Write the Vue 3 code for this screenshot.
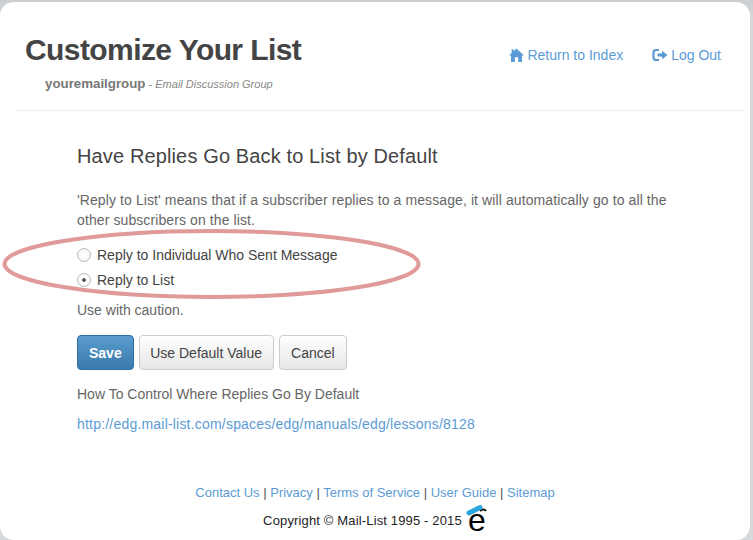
<template>
  <div class="window">
    <header class="page-header">
      <div class="titles">
        <h1>Customize Your List</h1>
        <p class="group"><strong>youremailgroup</strong> - <em>Email Discussion Group</em></p>
      </div>
      <nav class="top-links">
        <a href="#">
          <svg width="15" height="14" viewBox="0 0 15 14"><path d="M7.5 0.5 L15 7.4 H13 V14 H9.2 V9.2 H5.8 V14 H2 V7.4 H0 L2.6 5 V1.2 H4.6 V3.2 Z" fill="#5b9bd5" /></svg>
          Return to Index
        </a>
        <a href="#">
          <svg width="16" height="14" viewBox="0 0 16 14"><path d="M7 2 H4 A2.4 2.4 0 0 0 1.5 4.4 V9.6 A2.4 2.4 0 0 0 4 12 H7" fill="none" stroke="#5b9bd5" stroke-width="2.2" /><path d="M5.5 5.4 H10 V2.8 L15.5 7 L10 11.2 V8.6 H5.5 Z" fill="#5b9bd5" /></svg>
          Log Out
        </a>
      </nav>
    </header>

    <main class="content">
      <h2>Have Replies Go Back to List by Default</h2>
      <p class="intro">'Reply to List' means that if a subscriber replies to a message, it will automatically go to all the other subscribers on the list.</p>

      <div class="options">
        <label v-for="opt in options" :key="opt.value" class="option">
          <input type="radio" name="reply" :value="opt.value" v-model="choice" />
          <span class="dot"></span>
          {{ opt.label }}
        </label>
      </div>

      <p class="caution">Use with caution.</p>

      <div class="buttons">
        <button class="btn primary">Save</button>
        <button class="btn">Use Default Value</button>
        <button class="btn">Cancel</button>
      </div>

      <p class="howto">How To Control Where Replies Go By Default</p>
      <a class="lesson" href="#">http://edg.mail-list.com/spaces/edg/manuals/edg/lessons/8128</a>
    </main>

    <footer class="page-footer">
      <div class="links">
        <template v-for="(link, i) in footerLinks" :key="link">
          <span v-if="i > 0" class="sep"> | </span><a href="#">{{ link }}</a>
        </template>
      </div>
      <div class="copyright">
        Copyright © Mail-List 1995 - 2015
        <span class="logo">
          <span class="logo-e">e</span>
          <svg class="logo-cap" width="24" height="14" viewBox="0 0 24 14"><path d="M16 8 Q20 5 22 8" fill="none" stroke="#111" stroke-width="2" /><path d="M5 10 L16 4.5" stroke="#2ba6de" stroke-width="5" stroke-linecap="round" /></svg>
        </span>
      </div>
    </footer>

    <!-- hand-drawn highlight over the radio buttons -->
    <svg class="oval" width="430" height="80" viewBox="0 0 430 80">
      <ellipse cx="211.5" cy="39" rx="207" ry="33" fill="none" stroke="#e09a9a" stroke-width="4" />
    </svg>
  </div>
</template>

<script setup>
import { ref } from 'vue'

const choice = ref('list')

const options = [
  { value: 'individual', label: 'Reply to Individual Who Sent Message' },
  { value: 'list', label: 'Reply to List' },
]

const footerLinks = ['Contact Us', 'Privacy', 'Terms of Service', 'User Guide', 'Sitemap']
</script>

<style>
html,
body {
  margin: 0;
  height: 540px;
  overflow: hidden;
  background: linear-gradient(#c9ced2, #d5d9dc 20px);
}
</style>

<style scoped>
.window {
  position: relative;
  box-sizing: border-box;
  width: 750px;
  height: 538px;
  margin-top: 2px;
  padding: 0 10px;
  background: #fff;
  border-radius: 14px;
  font-family: "Liberation Sans", Arial, sans-serif;
  font-size: 14px;
  line-height: 20px;
  color: #666;
}

a {
  color: #5b9bd5;
  text-decoration: none;
}

.page-header {
  display: flex;
  justify-content: space-between;
  box-sizing: border-box;
  height: 109px;
  margin: 0 -5px 0 5px;
  padding: 0 5px 0 10px;
  border-bottom: 1px solid #eee;
}

h1 {
  margin: 30px 0 0;
  font-size: 30px;
  line-height: 36px;
  font-weight: bold;
  letter-spacing: -0.58px;
  color: #444;
}

.group {
  margin: 6px 0 0 20px;
  font-size: 11px;
  line-height: 20px;
  color: #888;
}

.group strong {
  font-size: 13.3px;
  color: #777;
}

.top-links {
  display: flex;
  gap: 29px;
  height: 20px;
  padding: 43px 19px 0 0;
}

.top-links a {
  display: flex;
  align-items: center;
  gap: 3px;
}

.content {
  padding: 0 67px;
}

h2 {
  margin: 33px 0 0;
  font-size: 20px;
  line-height: 24px;
  font-weight: normal;
  letter-spacing: 0.13px;
  color: #444;
}

.intro {
  margin: 22px 0 0;
  letter-spacing: 0.1px;
}

.options {
  margin-top: 12px;
}

.option {
  position: relative;
  display: flex;
  align-items: center;
  height: 25px;
  color: #444;
}

.option input {
  position: absolute;
  margin: 0;
  opacity: 0;
}

.dot {
  box-sizing: border-box;
  width: 14px;
  height: 14px;
  margin-right: 6px;
  border: 1px solid #bbb;
  border-radius: 50%;
  background: radial-gradient(#fff, #f4f4f4);
}

.option input:checked + .dot {
  background: radial-gradient(circle, #555 0 1.5px, #fff 2.2px, #f4f4f4);
}

.caution {
  margin: 8px 0 0;
}

.buttons {
  display: flex;
  gap: 5px;
  margin-top: 15px;
}

.btn {
  height: 35px;
  padding: 0 10.5px;
  border: 1px solid #ccc;
  border-radius: 4px;
  background: linear-gradient(#fff, #e6e6e6);
  font-family: inherit;
  font-size: 14px;
  color: #444;
}

.btn:last-child {
  padding: 0 11.5px;
}

.btn.primary {
  padding: 0 11px;
  font-weight: bold;
  color: #fff;
  border-color: #2e6da4;
  background: linear-gradient(#5a9ccf, #3a7aac);
}

.howto {
  margin: 14px 0 0;
}

.lesson {
  display: block;
  margin-top: 10px;
  letter-spacing: 0.2px;
}

.page-footer {
  margin-top: 49px;
  text-align: center;
}

.links {
  font-size: 13px;
  color: #5b9bd5;
}

.sep {
  color: #555;
}

.copyright {
  display: flex;
  justify-content: center;
  gap: 5px;
  margin-top: 8px;
  font-size: 13px;
  letter-spacing: 0.15px;
  color: #222;
}

.logo {
  position: relative;
  display: inline-block;
  width: 20px;
}

.logo-e {
  position: absolute;
  left: 1px;
  top: -7px;
  font-size: 32px;
  line-height: 32px;
  color: #000;
}

.logo-cap {
  position: absolute;
  left: -3px;
  top: -8px;
}

.oval {
  position: absolute;
  left: 0;
  top: 223px;
  pointer-events: none;
}
</style>
